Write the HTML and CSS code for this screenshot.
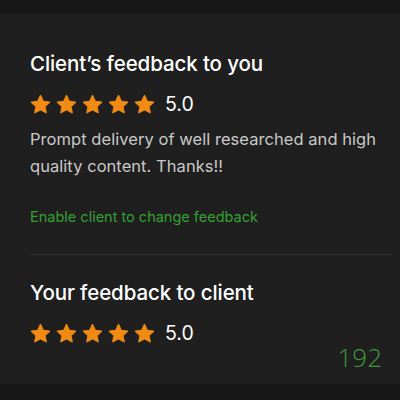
FILE: index.html
```html
<!DOCTYPE html>
<html lang="en">
<head>
  <meta charset="UTF-8">
  <meta name="viewport" content="width=device-width, initial-scale=1.0">
  <title>Feedback</title>
  <link rel="stylesheet" href="styles.css">
</head>
<body>
  <svg width="0" height="0" style="position:absolute">
    <defs>
      <symbol id="star" viewBox="0 0 24 24">
        <path d="M12 1.8l3.1 6.6 7.2.9-5.3 5 1.4 7.1L12 17.9l-6.4 3.5 1.4-7.1-5.3-5 7.2-.9z" fill="#f08a12" stroke="#f08a12" stroke-width="1.6" stroke-linejoin="round"/>
      </symbol>
    </defs>
  </svg>

  <div class="top-bar"></div>

  <div class="panel">
    <section class="block">
      <h2>Client’s feedback to you</h2>
      <div class="rating">
        <span class="stars">
          <svg><use href="#star"/></svg>
          <svg><use href="#star"/></svg>
          <svg><use href="#star"/></svg>
          <svg><use href="#star"/></svg>
          <svg><use href="#star"/></svg>
        </span>
        <span class="score">5.0</span>
      </div>
      <p class="comment">Prompt delivery of well researched and high quality content. Thanks!!</p>
      <a class="link" href="#">Enable client to change feedback</a>
    </section>

    <hr class="divider">

    <section class="block">
      <h2>Your feedback to client</h2>
      <div class="rating">
        <span class="stars">
          <svg><use href="#star"/></svg>
          <svg><use href="#star"/></svg>
          <svg><use href="#star"/></svg>
          <svg><use href="#star"/></svg>
          <svg><use href="#star"/></svg>
        </span>
        <span class="score">5.0</span>
      </div>
    </section>

    <div class="counter">192</div>
  </div>

  <div class="bottom-bar"></div>
</body>
</html>
```

FILE: styles.css
```css
body {
  margin: 0;
  background-color: #181818;
  font-family: Inter, "Liberation Sans", Arial, sans-serif;
  color: #fff;
  width: 400px;
  height: 400px;
  overflow: hidden;
}
.top-bar {
  height: 14px;
  background-color: #181818;
}
.panel {
  height: 370px;
  background-color: #1f1f1f;
  padding: 0 8px 0 30px;
  box-sizing: border-box;
  display: flex;
  flex-direction: column;
}
.bottom-bar {
  height: 16px;
  background-color: #171717;
}
.block h2 {
  margin: 37px 0 0;
  font-size: 20.5px;
  font-weight: 500;
  line-height: 26px;
  letter-spacing: -0.1px;
}
.rating {
  display: flex;
  align-items: center;
  margin-top: 15px;
  height: 24px;
}
.stars {
  display: flex;
  gap: 5px;
}
.stars svg {
  width: 21px;
  height: 21px;
}
.score {
  margin-left: 10px;
  font-size: 19.5px;
  line-height: 24px;
}
.comment {
  margin: 10px 0 0;
  font-size: 16.5px;
  line-height: 27px;
  color: #c9c9c9;
  letter-spacing: 0.05px;
}
.link {
  display: block;
  margin-top: 28px;
  font-size: 14.5px;
  line-height: 18px;
  color: #35a133;
  text-decoration: none;
}
.divider {
  border: none;
  border-top: 1px solid #333;
  margin: 28px 0 0;
}
.divider + .block h2 {
  margin-top: 25px;
}
.counter {
  align-self: flex-end;
  margin: -3px 10px 0 0;
  font-family: "Open Sans", sans-serif;
  font-weight: 300;
  font-size: 26px;
  line-height: 30px;
  color: #3f9b3c;
}
```
